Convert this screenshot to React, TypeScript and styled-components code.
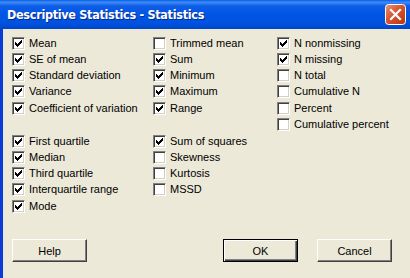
import styled, { createGlobalStyle } from "styled-components";

const GlobalStyle = createGlobalStyle`
  html, body {
    margin: 0;
    padding: 0;
    width: 410px;
    height: 278px;
    overflow: hidden;
    background: #ece9d8;
  }
`;

type Item = { label: string; checked: boolean };

const columns: Item[][][] = [
  [
    [
      { label: "Mean", checked: true },
      { label: "SE of mean", checked: true },
      { label: "Standard deviation", checked: true },
      { label: "Variance", checked: true },
      { label: "Coefficient of variation", checked: true },
    ],
    [
      { label: "First quartile", checked: true },
      { label: "Median", checked: true },
      { label: "Third quartile", checked: true },
      { label: "Interquartile range", checked: true },
      { label: "Mode", checked: true },
    ],
  ],
  [
    [
      { label: "Trimmed mean", checked: false },
      { label: "Sum", checked: true },
      { label: "Minimum", checked: true },
      { label: "Maximum", checked: true },
      { label: "Range", checked: true },
    ],
    [
      { label: "Sum of squares", checked: true },
      { label: "Skewness", checked: false },
      { label: "Kurtosis", checked: false },
      { label: "MSSD", checked: false },
    ],
  ],
  [
    [
      { label: "N nonmissing", checked: true },
      { label: "N missing", checked: true },
      { label: "N total", checked: false },
      { label: "Cumulative N", checked: false },
      { label: "Percent", checked: false },
      { label: "Cumulative percent", checked: false },
    ],
  ],
];

// classic 7x7 tick, one rect per pixel run
const tick = [
  [6, 0, 1],
  [5, 1, 2],
  [0, 2, 1],
  [4, 2, 3],
  [0, 3, 2],
  [3, 3, 3],
  [0, 4, 5],
  [1, 5, 3],
  [2, 6, 1],
];

const CheckMark = () => (
  <svg width="7" height="7" viewBox="0 0 7 7" shapeRendering="crispEdges">
    {tick.map(([x, y, w]) => (
      <rect key={`${x}-${y}`} x={x} y={y} width={w} height={1} fill="#000" />
    ))}
  </svg>
);

const CloseIcon = () => (
  <svg width="21" height="21" viewBox="0 0 21 21">
    <defs>
      <linearGradient id="closeBg" x1="0" y1="0" x2="1" y2="1">
        <stop offset="0" stopColor="#e9967a" />
        <stop offset="0.45" stopColor="#d9532d" />
        <stop offset="1" stopColor="#b8340f" />
      </linearGradient>
    </defs>
    <rect x="0.5" y="0.5" width="20" height="20" rx="3" fill="url(#closeBg)" stroke="#fff" />
    <path d="M6 6 L15 15 M15 6 L6 15" stroke="#fff" strokeWidth="2.2" strokeLinecap="square" />
  </svg>
);

const App = () => {
  return (
    <>
      <GlobalStyle />
      <Window>
        <TitleBar>
          <Title>Descriptive Statistics - Statistics</Title>
          <CloseButton>
            <CloseIcon />
          </CloseButton>
        </TitleBar>
        <Body>
          <Options>
            {columns.map((groups, ci) => (
              <Column key={ci}>
                {groups.map((items, gi) => (
                  <Group key={gi}>
                    {items.map((item) => (
                      <Row key={item.label}>
                        <Box>{item.checked && <CheckMark />}</Box>
                        <Label>{item.label}</Label>
                      </Row>
                    ))}
                  </Group>
                ))}
              </Column>
            ))}
          </Options>
          <ButtonBar>
            <Button>Help</Button>
            <RightButtons>
              <Button $default>OK</Button>
              <Button>Cancel</Button>
            </RightButtons>
          </ButtonBar>
        </Body>
      </Window>
    </>
  );
};

export default App;

const Window = styled.div`
  width: 410px;
  height: 278px;
  display: flex;
  flex-direction: column;
  border-left: 3px solid #0b3bd8;
  box-sizing: border-box;
  font-family: Tahoma, "Liberation Sans", Arial, sans-serif;
  font-size: 11px;
  color: #000;
`;

const TitleBar = styled.div`
  height: 29px;
  flex: none;
  display: flex;
  align-items: center;
  justify-content: space-between;
  padding: 0 4px 0 4px;
  margin-left: -3px;
  background: linear-gradient(
    to bottom,
    #0a5fe8 0%,
    #3d8cf5 8%,
    #0f5de6 20%,
    #0055e5 50%,
    #0052e0 80%,
    #0046c8 100%
  );
`;

const Title = styled.span`
  color: #fff;
  font-family: "DejaVu Sans Condensed", "Liberation Sans", sans-serif;
  font-stretch: condensed;
  font-weight: bold;
  font-size: 12.5px;
  letter-spacing: -0.3px;
  padding-left: 3px;
  text-shadow: 1px 1px 0 #0a2a8a;
`;

const CloseButton = styled.div`
  width: 21px;
  height: 21px;
  display: flex;
`;

const Body = styled.div`
  flex: 1;
  display: flex;
  flex-direction: column;
  padding: 6px 18px 0 9px;
`;

const Options = styled.div`
  display: grid;
  grid-template-columns: 141px 124px auto;
`;

const Column = styled.div`
  display: flex;
  flex-direction: column;
  gap: 16.75px;
`;

const Group = styled.div`
  display: flex;
  flex-direction: column;
`;

const Row = styled.div`
  height: 16.25px;
  display: flex;
  align-items: center;
  gap: 4px;
  white-space: nowrap;
`;

const Box = styled.span`
  width: 13px;
  height: 13px;
  box-sizing: border-box;
  flex: none;
  display: flex;
  align-items: center;
  justify-content: center;
  background: #fff;
  border: 1px solid;
  border-color: #808080 #fff #fff #808080;
  box-shadow: inset 1px 1px 0 #404040, inset -1px -1px 0 #d4d0c8;
`;

const Label = styled.span`
  line-height: 13px;
`;

const ButtonBar = styled.div`
  margin-top: 25px;
  display: flex;
  justify-content: space-between;
`;

const RightButtons = styled.div`
  display: flex;
  gap: 19px;
`;

const Button = styled.button<{ $default?: boolean }>`
  width: 75px;
  height: 23px;
  box-sizing: border-box;
  padding: 0;
  background: #ece9d8;
  font: inherit;
  color: #000;
  border: 1px solid;
  border-color: ${(p) => (p.$default ? "#000" : "#fff #404040 #404040 #fff")};
  box-shadow: ${(p) =>
    p.$default
      ? "inset 1px 1px 0 #fff, inset -1px -1px 0 #404040, inset -2px -2px 0 #808080"
      : "inset -1px -1px 0 #808080"};
`;
